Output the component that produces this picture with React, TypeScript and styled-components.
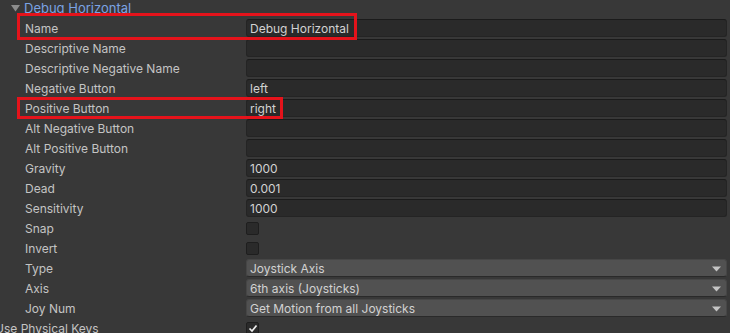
import React from "react";
import styled, { createGlobalStyle } from "styled-components";

const GlobalStyle = createGlobalStyle`
  html, body { margin: 0; padding: 0; background: #383838; overflow: hidden; }
  body { font-family: Inter, "Noto Sans", "Liberation Sans", sans-serif; font-size: 12px; }
  * { box-sizing: border-box; }
`;

const Panel = styled.div`
  width: 730px;
  height: 333px;
  display: flex;
  flex-direction: column;
  background: #383838;
  overflow: hidden;
`;

const Header = styled.div`
  height: 18px;
  flex-shrink: 0;
  display: flex;
  align-items: center;
  gap: 4px;
  padding-left: 11px;
  padding-bottom: 3px;
  color: #7ba3e3;
  font-size: 13px;
  white-space: nowrap;
`;

const Row = styled.div`
  position: relative;
  height: 20px;
  flex-shrink: 0;
  display: grid;
  grid-template-columns: 246px 1fr;
  align-items: center;
  padding-right: 3px;
`;

const Label = styled.div<{ $indent: number }>`
  margin-left: ${(p) => p.$indent}px;
  padding-top: 1px;
  color: #c4c4c4;
  white-space: nowrap;
`;

const TextField = styled.div`
  height: 18px;
  background: #2a2a2a;
  border: 1px solid #242424;
  border-top-color: #1b1b1b;
  border-radius: 3px;
  color: #d2d2d2;
  padding: 1px 0 0 3px;
  display: flex;
  align-items: center;
  white-space: nowrap;
`;

const Dropdown = styled.div`
  height: 18px;
  background: #515151;
  border: 1px solid #464646;
  border-bottom-color: #2a2a2a;
  border-radius: 3px;
  color: #d2d2d2;
  padding: 1px 5px 0 3px;
  display: flex;
  align-items: center;
  justify-content: space-between;
  white-space: nowrap;
`;

const Checkbox = styled.div`
  width: 13px;
  height: 13px;
  background: #2a2a2a;
  border: 1px solid #1e1e1e;
  border-radius: 2px;
  display: flex;
  align-items: center;
  justify-content: center;
`;

const Highlight = styled.div<{ $top: number; $left: number; $w: number; $h: number }>`
  position: absolute;
  top: ${(p) => p.$top}px;
  left: ${(p) => p.$left}px;
  width: ${(p) => p.$w}px;
  height: ${(p) => p.$h}px;
  border: 3px solid #e5131b;
  pointer-events: none;
  z-index: 2;
`;

type Field =
  | { kind: "text"; value: string }
  | { kind: "check"; checked: boolean }
  | { kind: "drop"; value: string };

type RowDef = {
  label: string;
  field: Field;
  indent?: number;
  hl?: { top: number; left: number; w: number; h: number };
};

const rows: RowDef[] = [
  { label: "Name", field: { kind: "text", value: "Debug Horizontal" }, hl: { top: -5, left: 17, w: 340, h: 27 } },
  { label: "Descriptive Name", field: { kind: "text", value: "" } },
  { label: "Descriptive Negative Name", field: { kind: "text", value: "" } },
  { label: "Negative Button", field: { kind: "text", value: "left" } },
  { label: "Positive Button", field: { kind: "text", value: "right" }, hl: { top: -1, left: 17, w: 266, h: 22 } },
  { label: "Alt Negative Button", field: { kind: "text", value: "" } },
  { label: "Alt Positive Button", field: { kind: "text", value: "" } },
  { label: "Gravity", field: { kind: "text", value: "1000" } },
  { label: "Dead", field: { kind: "text", value: "0.001" } },
  { label: "Sensitivity", field: { kind: "text", value: "1000" } },
  { label: "Snap", field: { kind: "check", checked: false } },
  { label: "Invert", field: { kind: "check", checked: false } },
  { label: "Type", field: { kind: "drop", value: "Joystick Axis" } },
  { label: "Axis", field: { kind: "drop", value: "6th axis (Joysticks)" } },
  { label: "Joy Num", field: { kind: "drop", value: "Get Motion from all Joysticks" } },
  { label: "Use Physical Keys", field: { kind: "check", checked: true }, indent: -5 },
];

const Arrow = () => (
  <svg width="9" height="6" viewBox="0 0 9 6">
    <polygon points="0,0.5 9,0.5 4.5,5.5" fill="#c4c4c4" />
  </svg>
);

const Fold = () => (
  <svg width="9" height="8" viewBox="0 0 9 8">
    <polygon points="0,1 9,1 4.5,7.5" fill="#8c8c8c" />
  </svg>
);

const Check = () => (
  <svg width="10" height="9" viewBox="0 0 10 9">
    <polyline points="1.5,4.5 4,7 8.5,1.5" fill="none" stroke="#ececec" strokeWidth="1.7" />
  </svg>
);

function renderField(f: Field) {
  if (f.kind === "text") return <TextField>{f.value}</TextField>;
  if (f.kind === "drop")
    return (
      <Dropdown>
        <span>{f.value}</span>
        <Arrow />
      </Dropdown>
    );
  return <Checkbox>{f.checked ? <Check /> : null}</Checkbox>;
}

export default function App() {
  return (
    <>
      <GlobalStyle />
      <Panel>
        <Header>
          <Fold />
          <span>Debug Horizontal</span>
        </Header>
        {rows.map((r) => (
          <Row key={r.label}>
            <Label $indent={r.indent ?? 25}>{r.label}</Label>
            {renderField(r.field)}
            {r.hl && <Highlight $top={r.hl.top} $left={r.hl.left} $w={r.hl.w} $h={r.hl.h} />}
          </Row>
        ))}
      </Panel>
    </>
  );
}
